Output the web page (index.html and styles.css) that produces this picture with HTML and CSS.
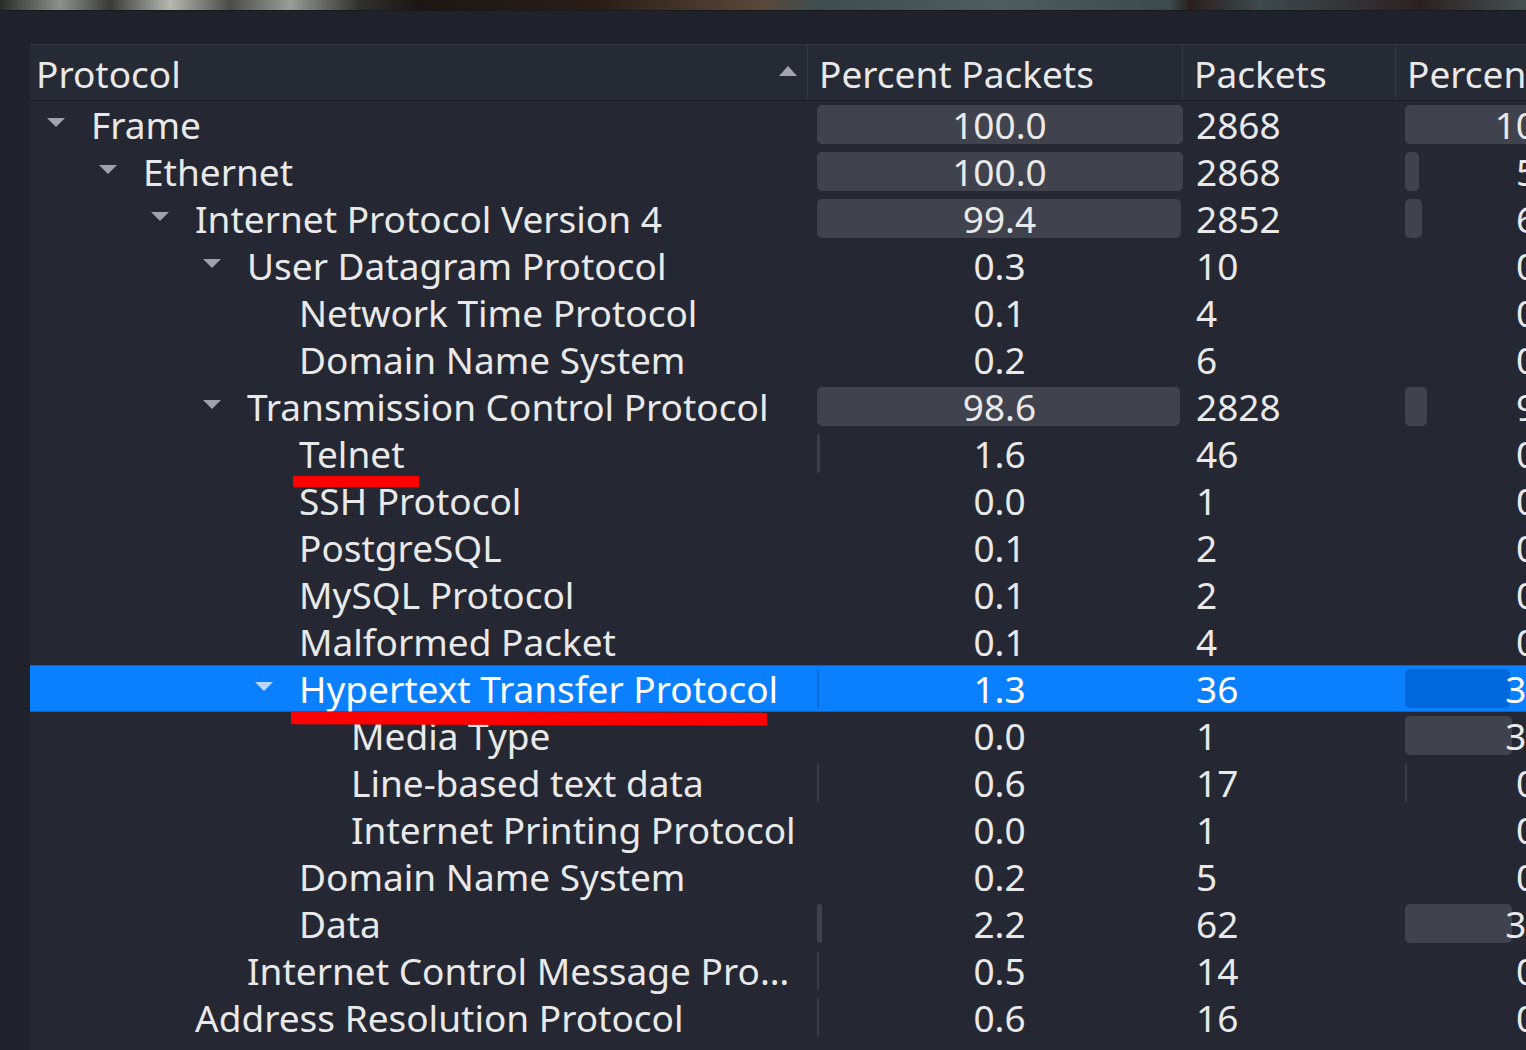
FILE: index.html
```html
<!DOCTYPE html>
<html>
<head>
<meta charset="utf-8">
<title>Protocol Hierarchy</title>
<link rel="stylesheet" href="styles.css">
</head>
<body>
<div class="photo"></div>
<div class="stage">
  <div class="tree">
    <div class="header">
      <div class="hcell c1"><span class="htext">Protocol</span><span class="sort"></span></div>
      <div class="hcell c2">Percent Packets</div>
      <div class="hcell c3">Packets</div>
      <div class="hcell c4">Percent Bytes</div>
    </div>

    <div class="row">
      <div class="cell c1" style="--lvl:0"><span class="arrow"></span><span class="name">Frame</span></div>
      <div class="cell c2"><span class="bar" style="width:366px"></span><span class="val">100.0</span></div>
      <div class="cell c3">2868</div>
      <div class="cell c4"><span class="bar" style="width:280px"></span><span class="val">100.0</span></div>
    </div>
    <div class="row">
      <div class="cell c1" style="--lvl:1"><span class="arrow"></span><span class="name">Ethernet</span></div>
      <div class="cell c2"><span class="bar" style="width:366px"></span><span class="val">100.0</span></div>
      <div class="cell c3">2868</div>
      <div class="cell c4"><span class="bar" style="width:14px"></span><span class="val">5.2</span></div>
    </div>
    <div class="row">
      <div class="cell c1" style="--lvl:2"><span class="arrow"></span><span class="name">Internet Protocol Version 4</span></div>
      <div class="cell c2"><span class="bar" style="width:364px"></span><span class="val">99.4</span></div>
      <div class="cell c3">2852</div>
      <div class="cell c4"><span class="bar" style="width:17px"></span><span class="val">6.1</span></div>
    </div>
    <div class="row">
      <div class="cell c1" style="--lvl:3"><span class="arrow"></span><span class="name">User Datagram Protocol</span></div>
      <div class="cell c2"><span class="val">0.3</span></div>
      <div class="cell c3">10</div>
      <div class="cell c4"><span class="val">0.1</span></div>
    </div>
    <div class="row">
      <div class="cell c1" style="--lvl:4"><span class="arrow none"></span><span class="name">Network Time Protocol</span></div>
      <div class="cell c2"><span class="val">0.1</span></div>
      <div class="cell c3">4</div>
      <div class="cell c4"><span class="val">0.0</span></div>
    </div>
    <div class="row">
      <div class="cell c1" style="--lvl:4"><span class="arrow none"></span><span class="name">Domain Name System</span></div>
      <div class="cell c2"><span class="val">0.2</span></div>
      <div class="cell c3">6</div>
      <div class="cell c4"><span class="val">0.0</span></div>
    </div>
    <div class="row">
      <div class="cell c1" style="--lvl:3"><span class="arrow"></span><span class="name">Transmission Control Protocol</span></div>
      <div class="cell c2"><span class="bar" style="width:363px"></span><span class="val">98.6</span></div>
      <div class="cell c3">2828</div>
      <div class="cell c4"><span class="bar" style="width:22px"></span><span class="val">9.4</span></div>
    </div>
    <div class="row">
      <div class="cell c1" style="--lvl:4"><span class="arrow none"></span><span class="name">Telnet</span></div>
      <div class="cell c2"><span class="bar thin" style="width:3px"></span><span class="val">1.6</span></div>
      <div class="cell c3">46</div>
      <div class="cell c4"><span class="val">0.1</span></div>
    </div>
    <div class="row">
      <div class="cell c1" style="--lvl:4"><span class="arrow none"></span><span class="name">SSH Protocol</span></div>
      <div class="cell c2"><span class="val">0.0</span></div>
      <div class="cell c3">1</div>
      <div class="cell c4"><span class="val">0.0</span></div>
    </div>
    <div class="row">
      <div class="cell c1" style="--lvl:4"><span class="arrow none"></span><span class="name">PostgreSQL</span></div>
      <div class="cell c2"><span class="val">0.1</span></div>
      <div class="cell c3">2</div>
      <div class="cell c4"><span class="val">0.0</span></div>
    </div>
    <div class="row">
      <div class="cell c1" style="--lvl:4"><span class="arrow none"></span><span class="name">MySQL Protocol</span></div>
      <div class="cell c2"><span class="val">0.1</span></div>
      <div class="cell c3">2</div>
      <div class="cell c4"><span class="val">0.0</span></div>
    </div>
    <div class="row">
      <div class="cell c1" style="--lvl:4"><span class="arrow none"></span><span class="name">Malformed Packet</span></div>
      <div class="cell c2"><span class="val">0.1</span></div>
      <div class="cell c3">4</div>
      <div class="cell c4"><span class="val">0.0</span></div>
    </div>
    <div class="row selected">
      <div class="cell c1" style="--lvl:4"><span class="arrow"></span><span class="name">Hypertext Transfer Protocol</span></div>
      <div class="cell c2"><span class="bar thin" style="width:2px"></span><span class="val">1.3</span></div>
      <div class="cell c3">36</div>
      <div class="cell c4"><span class="bar" style="width:105px"></span><span class="val">39.9</span></div>
    </div>
    <div class="row">
      <div class="cell c1" style="--lvl:5"><span class="arrow none"></span><span class="name">Media Type</span></div>
      <div class="cell c2"><span class="val">0.0</span></div>
      <div class="cell c3">1</div>
      <div class="cell c4"><span class="bar" style="width:107px"></span><span class="val">38.6</span></div>
    </div>
    <div class="row">
      <div class="cell c1" style="--lvl:5"><span class="arrow none"></span><span class="name">Line-based text data</span></div>
      <div class="cell c2"><span class="bar thin" style="width:2px"></span><span class="val">0.6</span></div>
      <div class="cell c3">17</div>
      <div class="cell c4"><span class="bar thin" style="width:2px"></span><span class="val">0.9</span></div>
    </div>
    <div class="row">
      <div class="cell c1" style="--lvl:5"><span class="arrow none"></span><span class="name">Internet Printing Protocol</span></div>
      <div class="cell c2"><span class="val">0.0</span></div>
      <div class="cell c3">1</div>
      <div class="cell c4"><span class="val">0.1</span></div>
    </div>
    <div class="row">
      <div class="cell c1" style="--lvl:4"><span class="arrow none"></span><span class="name">Domain Name System</span></div>
      <div class="cell c2"><span class="val">0.2</span></div>
      <div class="cell c3">5</div>
      <div class="cell c4"><span class="val">0.0</span></div>
    </div>
    <div class="row">
      <div class="cell c1" style="--lvl:4"><span class="arrow none"></span><span class="name">Data</span></div>
      <div class="cell c2"><span class="bar" style="width:5px"></span><span class="val">2.2</span></div>
      <div class="cell c3">62</div>
      <div class="cell c4"><span class="bar" style="width:107px"></span><span class="val">38.9</span></div>
    </div>
    <div class="row">
      <div class="cell c1" style="--lvl:3"><span class="arrow none"></span><span class="name">Internet Control Message Pro…</span></div>
      <div class="cell c2"><span class="bar thin" style="width:2px"></span><span class="val">0.5</span></div>
      <div class="cell c3">14</div>
      <div class="cell c4"><span class="val">0.0</span></div>
    </div>
    <div class="row">
      <div class="cell c1" style="--lvl:2"><span class="arrow none"></span><span class="name">Address Resolution Protocol</span></div>
      <div class="cell c2"><span class="bar thin" style="width:2px"></span><span class="val">0.6</span></div>
      <div class="cell c3">16</div>
      <div class="cell c4"><span class="val">0.0</span></div>
    </div>
    <div class="row">
      <div class="cell c1" style="--lvl:2"><span class="arrow none"></span><span class="name"></span></div>
      <div class="cell c2"></div>
      <div class="cell c3"></div>
      <div class="cell c4"></div>
    </div>
  </div>
</div>
<div class="mark mark-telnet"></div>
<div class="mark mark-http"></div>
</body>
</html>
```

FILE: styles.css
```css
html, body {
  margin: 0;
  padding: 0;
}
body {
  width: 1526px;
  height: 1050px;
  overflow: hidden;
  background: #1f222a;
  font-family: "Noto Sans", "Open Sans", sans-serif;
  font-size: 37px;
  color: #e9e9ea;
  position: relative;
}
.photo {
  height: 10px;
  background: linear-gradient(90deg,
    #2a2c2c 0px, #8d908a 60px, #3a3b39 110px, #b6b8b0 170px, #4b4c48 230px,
    #9a9c96 290px, #2f302d 360px, #1b1612 420px, #2a1e16 600px, #5a4738 760px,
    #3e4d50 820px, #4d5d60 1000px, #3c4a4d 1170px, #2a1e1e 1190px, #3e4a4c 1260px,
    #2b2022 1420px, #45514f 1526px);
  border-bottom: 1px solid #17191f;
}
.stage {
  padding: 33px 0 0 30px;
}
.tree {
  width: 1658px;
  background: #252833;
}
.header, .row {
  display: grid;
  grid-template-columns: 778px 375px 213px 292px;
}
.header {
  height: 55px;
  border-top: 1px solid #363a45;
  border-bottom: 1px solid #1b1e25;
  background: #262a34;
}
.hcell {
  display: flex;
  align-items: center;
  white-space: nowrap;
  border-right: 1px solid #363a44;
  padding-left: 11px;
  padding-top: 2px;
  box-sizing: border-box;
  overflow: hidden;
}
.hcell.c1 {
  padding-left: 6px;
  justify-content: space-between;
  padding-right: 10px;
}
.hcell.c4 { border-right: none; }
.sort {
  width: 0;
  height: 0;
  border-left: 9px solid transparent;
  border-right: 9px solid transparent;
  border-bottom: 10px solid #a3a6ac;
  margin-top: -6px;
}
.row {
  height: 47px;
}
.cell {
  box-sizing: border-box;
  white-space: nowrap;
  line-height: 46px;
  padding-top: 1px;
}
.cell.c1 {
  display: flex;
  align-items: center;
  padding-left: calc(17px + var(--lvl) * 52px);
}
.arrow {
  flex: none;
  width: 0;
  height: 0;
  border-left: 9px solid transparent;
  border-right: 9px solid transparent;
  border-top: 9px solid #9fa2a8;
  margin-right: 26px;
  margin-top: -5px;
}
.arrow.none {
  border-top-color: transparent;
}
.cell.c2, .cell.c4 {
  display: grid;
  grid-template-areas: "s";
  padding-left: 9px;
  padding-top: 0;
}
.bar {
  grid-area: s;
  justify-self: start;
  align-self: stretch;
  margin: 4px 0 4px 0;
  background: #40434d;
  border-radius: 5px;
}
.bar.thin {
  border-radius: 1px;
  background: #3a3d47;
}
.val {
  grid-area: s;
  justify-self: center;
  padding-top: 1px;
  line-height: 46px;
  margin-left: -9px;
}
.cell.c2 .val { transform: translateX(4px); }
.cell.c3 {
  padding-left: 13px;
}
.row.selected {
  background: #0a80ff;
  box-shadow: inset 0 1px 0 #1d5fb3, inset 0 -1px 0 #1d5fb3;
  color: #ffffff;
}
.row.selected .arrow {
  border-top-color: #b9d9ff;
}
.row.selected .bar {
  background: #0068dc;
}
.row.selected .bar.thin {
  background: #0a6cd8;
}
.mark {
  position: absolute;
  background: #ff0000;
}
.mark-telnet {
  left: 293px;
  top: 476px;
  width: 126px;
  height: 11px;
}
.mark-http {
  left: 291px;
  top: 712px;
  width: 476px;
  height: 13px;
  transform: rotate(0.2deg);
}
```
